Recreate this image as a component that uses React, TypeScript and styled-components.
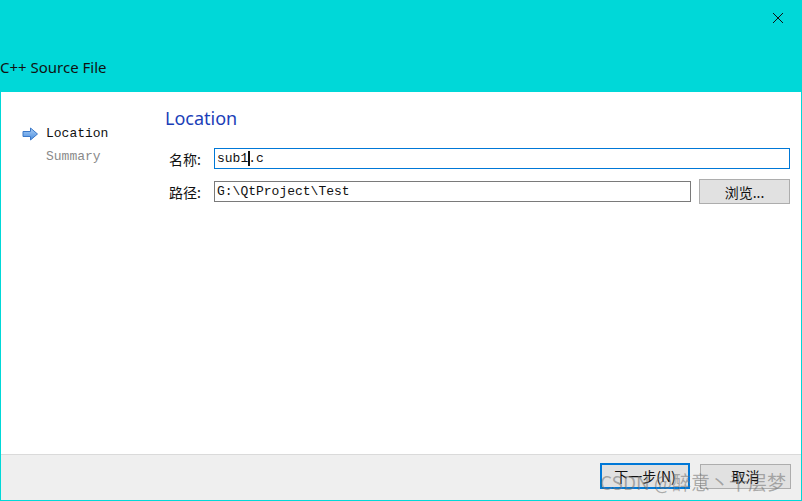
import React from "react";
import styled, { createGlobalStyle } from "styled-components";

const GlobalStyle = createGlobalStyle`
  html, body {
    margin: 0;
    padding: 0;
    background: #ffffff;
  }
  * {
    box-sizing: border-box;
  }
`;

const Window = styled.div`
  width: 802px;
  height: 501px;
  background: #00d8d8;
  display: flex;
  flex-direction: column;
  padding: 0 1px 1px 1px;
  overflow: hidden;
`;

const TitleBar = styled.div`
  height: 92px;
  flex: none;
  display: flex;
  flex-direction: column;
  justify-content: space-between;
`;

const CloseButton = styled.div`
  align-self: flex-end;
  width: 46px;
  height: 32px;
  display: flex;
  align-items: center;
  justify-content: center;
  margin-top: 2px;
`;

const Title = styled.div`
  font-family: "Noto Sans", "Liberation Sans", sans-serif;
  font-size: 15px;
  color: #111;
  margin-left: -1px;
  margin-bottom: 15px;
  line-height: 20px;
`;

const Body = styled.div`
  flex: 1;
  display: flex;
  flex-direction: column;
  background: #fff;
`;

const Main = styled.div`
  flex: 1;
  display: flex;
`;

const SideBar = styled.div`
  width: 163px;
  flex: none;
  padding: 33px 0 0 21px;
  display: flex;
  flex-direction: column;
  gap: 6px;
`;

const Step = styled.div<{ active?: boolean }>`
  display: flex;
  align-items: center;
  height: 17px;
  font-family: "Liberation Mono", "DejaVu Sans Mono", monospace;
  font-size: 13px;
  color: ${p => (p.active ? "#111" : "#8a8a8a")};
`;

const StepIcon = styled.span`
  width: 24px;
  display: flex;
  align-items: center;
`;

const Page = styled.div`
  flex: 1;
  padding: 14px 11px 0 1px;
  display: flex;
  flex-direction: column;
`;

const Heading = styled.div`
  font-family: "Noto Sans", "Liberation Sans", sans-serif;
  font-size: 18px;
  color: #1a3eb8;
  line-height: 24px;
  margin-bottom: 18px;
`;

const Form = styled.div`
  display: grid;
  grid-template-columns: 46px 1fr auto;
  row-gap: 10px;
  align-items: center;
  padding-left: 3px;
`;

const Label = styled.div`
  font-family: "Noto Sans CJK SC", sans-serif;
  font-size: 14px;
  color: #111;
  padding-left: 1px;
`;

const Field = styled.div<{ focused?: boolean; span?: boolean }>`
  height: 21px;
  border: 1px solid ${p => (p.focused ? "#0078d7" : "#7a7a7a")};
  grid-column: ${p => (p.span ? "2 / 4" : "auto")};
  font-family: "Liberation Mono", "DejaVu Sans Mono", monospace;
  font-size: 13px;
  color: #111;
  padding-left: 2px;
  display: flex;
  align-items: center;
  white-space: pre;
`;

const Caret = styled.span`
  display: inline-block;
  width: 2px;
  height: 15px;
  background: #111;
  margin: 0 -2px 0 0;
`;

const PushButton = styled.div<{ primary?: boolean }>`
  width: ${p => (p.primary ? "90px" : "91px")};
  height: ${p => (p.primary ? "26px" : "25px")};
  background: #e1e1e1;
  border: ${p => (p.primary ? "2px solid #0078d7" : "1px solid #adadad")};
  font-family: "Noto Sans CJK SC", sans-serif;
  font-size: 14px;
  color: #111;
  display: flex;
  align-items: center;
  justify-content: center;
`;

const BrowseButton = styled(PushButton)`
  margin-left: 8px;
`;

const Footer = styled.div`
  height: 46px;
  flex: none;
  background: #efefef;
  border-top: 1px solid #dadada;
  display: flex;
  justify-content: flex-end;
  align-items: center;
  gap: 10px;
  padding: 0 10px 3px 0;
  position: relative;
`;

const Watermark = styled.div`
  position: absolute;
  right: 15px;
  top: 13px;
  font-family: "Noto Sans CJK SC", sans-serif;
  font-size: 19px;
  color: rgba(110, 110, 110, 0.55);
  pointer-events: none;
`;

function ArrowIcon() {
  return (
    <svg width="17" height="14" viewBox="0 0 17 14">
      <defs>
        <linearGradient id="ag" x1="0" y1="0" x2="0" y2="1">
          <stop offset="0" stopColor="#a9cdf5" />
          <stop offset="1" stopColor="#4a8ee0" />
        </linearGradient>
      </defs>
      <path
        d="M1 4.5 H8.5 V1 L15.5 7 L8.5 13 V9.5 H1 Z"
        fill="url(#ag)"
        stroke="#3b78c8"
        strokeWidth="1"
        strokeLinejoin="round"
      />
    </svg>
  );
}

function CloseIcon() {
  return (
    <svg width="12" height="12" viewBox="0 0 12 12">
      <path d="M1 1 L11 11 M11 1 L1 11" stroke="#111" strokeWidth="1" />
    </svg>
  );
}

export default function App() {
  return (
    <>
      <GlobalStyle />
      <Window>
        <TitleBar>
          <CloseButton>
            <CloseIcon />
          </CloseButton>
          <Title>C++ Source File</Title>
        </TitleBar>
        <Body>
          <Main>
            <SideBar>
              <Step active>
                <StepIcon>
                  <ArrowIcon />
                </StepIcon>
                Location
              </Step>
              <Step>
                <StepIcon />
                Summary
              </Step>
            </SideBar>
            <Page>
              <Heading>Location</Heading>
              <Form>
                <Label>名称:</Label>
                <Field focused span>
                  sub1<Caret />.c
                </Field>
                <Label>路径:</Label>
                <Field>G:\QtProject\Test</Field>
                <BrowseButton>浏览...</BrowseButton>
              </Form>
            </Page>
          </Main>
          <Footer>
            <PushButton primary>下一步(N)</PushButton>
            <PushButton>取消</PushButton>
            <Watermark>CSDN @醉意丶千层梦</Watermark>
          </Footer>
        </Body>
      </Window>
    </>
  );
}
